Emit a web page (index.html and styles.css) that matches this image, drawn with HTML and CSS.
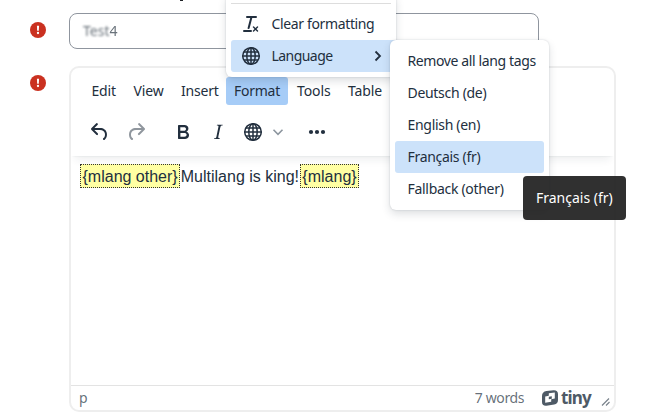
FILE: index.html
```html
<!DOCTYPE html>
<html lang="en">
<head>
<meta charset="utf-8">
<title>Editor</title>
<link rel="stylesheet" href="styles.css">
</head>
<body>
<svg class="defs" aria-hidden="true">
  <symbol id="globe" viewBox="0 0 20 20"><g fill="none" stroke="currentColor" stroke-width="1.5"><circle cx="10" cy="10" r="8.3"/><ellipse cx="10" cy="10" rx="4.2" ry="8.3"/><path d="M10 1.7v16.6M1.7 10h16.6M3 6h14M3 14h14"/></g></symbol>
  <symbol id="alert" viewBox="0 0 16 16"><circle cx="8" cy="8" r="8" fill="#ca3120"/><path d="M6.9 3.8h2.2l-.3 5H7.2z" fill="#fff"/><circle cx="8" cy="11" r="1.15" fill="#fff"/></symbol>
</svg>
<main class="page">
  <i class="heading-edge"></i>
  <div class="row name-row">
    <svg class="alert"><use href="#alert"/></svg>
    <div class="field"><span class="soft">Test</span><span class="digit">4</span></div>
  </div>
  <div class="row editor-row">
    <svg class="alert"><use href="#alert"/></svg>
    <section class="editor">
      <header class="head">
        <nav class="menubar"><span>Edit</span><span>View</span><span>Insert</span><span class="open">Format</span><span>Tools</span><span>Table</span></nav>
        <div class="toolbar">
          <svg class="icon" viewBox="0 0 24 24"><path d="M6.4 8H12c3.7 0 6.2 2 6.8 5.1.6 2.7-.4 5.6-2.3 6.8a1 1 0 0 1-1-1.8c1.1-.6 1.8-2.7 1.4-4.6-.5-2.1-2.1-3.5-4.9-3.5H6.4l3.3 3.3a1 1 0 1 1-1.4 1.4l-5-5a1 1 0 0 1 0-1.4l5-5a1 1 0 0 1 1.4 1.4L6.4 8Z"/></svg>
          <svg class="icon redo" viewBox="0 0 24 24"><path d="M17.6 8H12c-3.7 0-6.2 2-6.8 5.1-.6 2.7.4 5.6 2.3 6.8a1 1 0 0 0 1-1.8c-1.1-.6-1.8-2.7-1.4-4.6.5-2.1 2.1-3.5 4.9-3.5h5.6l-3.3 3.3a1 1 0 1 0 1.4 1.4l5-5a1 1 0 0 0 0-1.4l-5-5a1 1 0 0 0-1.4 1.4L17.6 8Z"/></svg>
          <svg class="icon bold" viewBox="0 0 24 24"><path d="M7.8 19c-.3 0-.5 0-.6-.2l-.2-.5V5.7c0-.2 0-.4.2-.5l.6-.2h5c1.5 0 2.7.3 3.5 1 .7.6 1.1 1.4 1.1 2.5a3 3 0 0 1-.6 1.9c-.4.6-1 1-1.6 1.2.4.1.9.3 1.3.6s.8.7 1 1.2c.4.4.5 1 .5 1.6 0 1.3-.4 2.3-1.3 3-.8.7-2.1 1-3.8 1H7.8Zm5-8.3c.6 0 1.2-.1 1.6-.5.4-.3.6-.7.6-1.3 0-1.1-.8-1.7-2.3-1.7H9.3v3.5h3.4Zm.5 6c.7 0 1.3-.1 1.7-.4.4-.4.6-.9.6-1.5s-.2-1-.7-1.4c-.4-.3-1-.4-2-.4H9.4v3.8h4Z"/></svg>
          <svg class="icon italic" viewBox="0 0 24 24"><path d="m16.7 4.7-.1.9h-.3c-.6 0-1 0-1.4.3-.3.3-.4.6-.5 1.1l-2.1 9.8v.6c0 .5.4.8 1.4.8h.2l-.2.8H8l.2-.8h.2c1.1 0 1.8-.5 2-1.5l2-9.8.1-.5c0-.6-.4-.8-1.4-.8h-.3l.2-.9h5.8Z"/></svg>
          <svg class="globe"><use href="#globe"/></svg>
          <svg class="chevron" viewBox="0 0 12 12"><path d="M1.5 3.8 6 8.3l4.5-4.5"/></svg>
          <svg class="icon more" viewBox="0 0 24 24"><circle cx="6" cy="12" r="2.1"/><circle cx="12" cy="12" r="2.1"/><circle cx="18" cy="12" r="2.1"/></svg>
        </div>
      </header>
      <div class="content"><span class="tag">{mlang other}</span>Multilang is king!<span class="tag">{mlang}</span></div>
      <footer class="status">
        <span>p</span><span class="words">7 words</span>
        <svg class="mark" viewBox="0 0 16 16"><path fill-rule="evenodd" d="M4.5 1 11.5.2Q16 0 16 4v6q0 3.800-3.800 4.500L4.500 15.800Q0 16.200 0 12V6q0-4.200 4.500-5ZM6.800 3.300v2.400l-3.600.7v6.300l6-1V9.300l3.600-.7V2.400ZM6.800 6.700l3-.5v2.600l-3 .5Z"/></svg>
        <span class="brand">tiny</span>
        <svg class="resize" viewBox="0 0 10 10"><path d="m1 8.5 7-7M5 8.5 8.500 5"/></svg>
      </footer>
    </section>
  </div>
</main>
<div class="menu format-menu">
  <div class="separator"></div>
  <div class="item"><svg class="icon" viewBox="0 0 24 24"><path d="M13.2 6a1 1 0 0 1 0 .2l-2.600 10a1 1 0 0 1-1 .8h-.2a.8.8 0 0 1-.8-1l2.600-10H8a1 1 0 1 1 0-2h9a1 1 0 0 1 0 2h-3.800ZM5 18h7a1 1 0 0 1 0 2H5a1 1 0 0 1 0-2Zm13 1.500L16.500 18 15 19.500a.7.7 0 0 1-1-1l1.500-1.500-1.500-1.500a.7.7 0 0 1 1-1l1.500 1.500 1.500-1.500a.7.7 0 0 1 1 1L17.500 17l1.500 1.500a.7.7 0 0 1-1 1Z"/></svg><span>Clear formatting</span></div>
  <div class="item active"><svg class="globe"><use href="#globe"/></svg><span>Language</span><svg class="caret" viewBox="0 0 12 12"><path d="m3.500 1.500 4.500 4.500-4.500 4.500"/></svg></div>
</div>
<div class="menu language-menu">
  <div class="item">Remove all lang tags</div>
  <div class="item">Deutsch (de)</div>
  <div class="item">English (en)</div>
  <div class="item active">Français (fr)</div>
  <div class="item">Fallback (other)</div>
</div>
<div class="tooltip">Français (fr)</div>
</body>
</html>
```
FILE: styles.css
```css
* { box-sizing: border-box; }
body { margin: 0; width: 648px; height: 417px; overflow: hidden; background: #fff; color: #222f3e; font: 14px/20px "Noto Sans", sans-serif; }
svg { display: block; flex: none; }
.defs { position: absolute; width: 0; height: 0; }
.page { height: 417px; padding-top: 13px; }
.heading-edge { position: absolute; left: 180px; top: 0; width: 3px; height: 1px; background: #1d2125; }
.row { display: grid; grid-template-columns: 39px 1fr; padding-left: 30px; }
.alert { width: 16px; height: 16px; margin-top: 9px; }
.field { width: 470px; height: 36px; border: 1px solid #8f959e; border-radius: 8px; padding: 7px 13px; color: #6a737b; font-size: 14px; display: flex; }
.soft { filter: blur(1.3px); }
.digit { filter: blur(.6px); }
.editor-row { margin-top: 17px; }
.editor { width: 547px; height: 346px; border: 2px solid #eee; border-radius: 10px; overflow: hidden; display: flex; flex-direction: column; }
.head { height: 88px; flex: none; box-shadow: 0 2px 2px -2px rgba(34,47,62,.1), 0 8px 8px -4px rgba(34,47,62,.07); }
.menubar { display: flex; height: 37px; padding: 9px 0 0 12px; }
.menubar span { padding: 0 8.4px; line-height: 28px; height: 28px; border-radius: 3px; letter-spacing: -.1px; margin-right: .6px; }
.menubar span:nth-child(3) { margin-right: -1.5px; letter-spacing: -.2px; }
.menubar .open { width: 62px; background: #a6ccf7; margin-right: 1px; letter-spacing: -.25px; }
.toolbar { display: flex; align-items: center; height: 54px; padding: 0 0 0 17px; }
.icon { width: 24px; height: 24px; fill: #222f3e; }
.redo { margin-left: 12px; opacity: .5; }
.bold { margin-left: 23px; }
.italic { margin-left: 11px; }
.globe { width: 20px; height: 20px; }
.toolbar .globe { margin-left: 13px; }
.chevron { width: 12px; height: 12px; margin-left: 9px; fill: none; stroke: #8d969f; stroke-width: 1.6; }
.more { margin-left: 21px; }
.content { flex: 1; padding: 8px 9px; font: 16px/25px "Liberation Sans", sans-serif; }
.tag { display: inline-block; height: 24px; line-height: 24px; padding: 0 1.5px; background: #ffffa3; border: 1px dotted #333; vertical-align: top; margin-right: .6px; }
.tag:last-child { margin-left: .8px; }
.status { display: flex; align-items: center; height: 25px; border-top: 1px solid #e3e3e3; padding: 0 3px 0 8px; color: rgba(34,47,62,.7); }
.words { margin-left: auto; margin-right: 18px; letter-spacing: -.4px; }
.mark { width: 16px; height: 16px; fill: #4e5a66; }
.brand { margin-left: 3px; width: 31px; font: 700 17px/20px "Noto Sans", sans-serif; letter-spacing: -.8px; color: #4e5a66; }
.resize { width: 10px; height: 10px; margin: 8px 0 0 9px; fill: none; stroke: #7a838c; stroke-width: 1.2; }
.menu { position: absolute; background: #fff; border-radius: 6px; box-shadow: 0 0 2px rgba(34,47,62,.2), 0 4px 8px rgba(34,47,62,.15); white-space: nowrap; letter-spacing: -.36px; }
.item { display: flex; align-items: center; height: 32px; border-radius: 3px; }
.item.active { background: #cce2fa; }
.format-menu { left: 226px; top: -6px; width: 170px; height: 83px; padding: 9px 5px 0; }
.separator { height: 1px; background: #ddd; margin-bottom: 4px; }
.format-menu .item { padding-left: 8px; }
.format-menu .item span { margin-left: 8.5px; }
.format-menu .globe { margin: 0 2px; }
.format-menu .active { width: 165px; border-radius: 3px 0 0 3px; letter-spacing: -.55px; }
.format-menu .caret { width: 12px; height: 12px; margin-left: auto; margin-right: 12px; fill: none; stroke: #222f3e; stroke-width: 1.8; }
.language-menu { left: 390px; top: 40px; width: 159px; height: 170px; padding: 5px; }
.language-menu .item { padding-left: 12.5px; letter-spacing: -.3px; }
.language-menu .item:first-child { letter-spacing: -.38px; }
.tooltip { position: absolute; left: 523px; top: 176px; width: 103px; height: 44px; padding: 12px 13px; border-radius: 4px; background: rgba(32,32,32,.93); color: #fff; white-space: nowrap; }
```
